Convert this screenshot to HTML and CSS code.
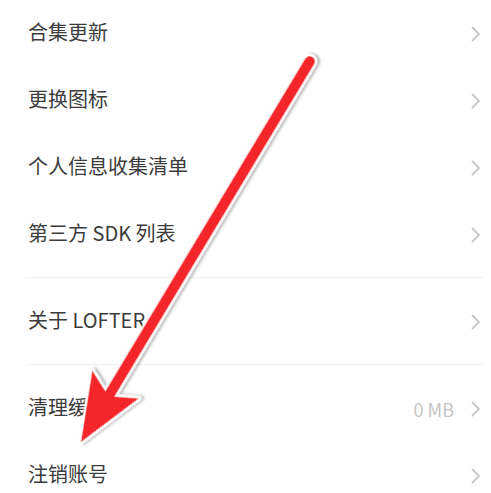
FILE: index.html
```html
<!DOCTYPE html>
<html lang="zh-CN">
<head>
<meta charset="utf-8">
<link rel="stylesheet" href="styles.css">
</head>
<body>
<div class="page">
  <div class="group">
    <div class="row"><span class="label">合集更新</span><span class="right"><svg class="chev" viewBox="0 0 10 16"><polyline points="1.5,1.5 8,8 1.5,14.5"/></svg></span></div>
    <div class="row"><span class="label">更换图标</span><span class="right"><svg class="chev" viewBox="0 0 10 16"><polyline points="1.5,1.5 8,8 1.5,14.5"/></svg></span></div>
    <div class="row"><span class="label">个人信息收集清单</span><span class="right"><svg class="chev" viewBox="0 0 10 16"><polyline points="1.5,1.5 8,8 1.5,14.5"/></svg></span></div>
    <div class="row"><span class="label">第三方 SDK 列表</span><span class="right"><svg class="chev" viewBox="0 0 10 16"><polyline points="1.5,1.5 8,8 1.5,14.5"/></svg></span></div>
  </div>
  <div class="divider"></div>
  <div class="group">
    <div class="row"><span class="label">关于 LOFTER</span><span class="right"><svg class="chev" viewBox="0 0 10 16"><polyline points="1.5,1.5 8,8 1.5,14.5"/></svg></span></div>
  </div>
  <div class="divider"></div>
  <div class="group">
    <div class="row"><span class="label">清理缓存</span><span class="right"><span class="value">0 MB</span><svg class="chev" viewBox="0 0 10 16"><polyline points="1.5,1.5 8,8 1.5,14.5"/></svg></span></div>
    <div class="row"><span class="label">注销账号</span><span class="right"><svg class="chev" viewBox="0 0 10 16"><polyline points="1.5,1.5 8,8 1.5,14.5"/></svg></span></div>
  </div>

  <svg class="arrow" viewBox="0 0 491 493" width="491" height="493">
    <defs>
      <filter id="sh" x="-20%" y="-20%" width="140%" height="140%">
        <feDropShadow dx="1.5" dy="2" stdDeviation="1.6" flood-color="#000" flood-opacity="0.35"/>
      </filter>
    </defs>
    <g transform="translate(81,442) rotate(-59)" filter="url(#sh)">
      <line x1="50" y1="0" x2="444" y2="0" stroke="#fff" stroke-width="15" stroke-linecap="round"/>
      <polygon points="0,0 67,27 56,5.5 56,-5.5 67,-27" fill="#fff" stroke="#fff" stroke-width="5" stroke-linejoin="round"/>
      <line x1="50" y1="0" x2="444" y2="0" stroke="#f5272b" stroke-width="10.5" stroke-linecap="round"/>
      <polygon points="0,0 67,27 56,5.2 56,-5.2 67,-27" fill="#f5272b"/>
    </g>
  </svg>
</div>
</body>
</html>
```
FILE: styles.css
```css
html, body {
  margin: 0;
  padding: 0;
  background: #ffffff;
}
body {
  font-family: "Noto Sans CJK SC", "Noto Sans", sans-serif;
  color: #3c3c3c;
}
.page {
  position: relative;
  width: 491px;
  height: 493px;
  overflow: hidden;
}
.group {
  display: flex;
  flex-direction: column;
}
.row {
  box-sizing: border-box;
  height: 67px;
  display: flex;
  align-items: center;
  justify-content: space-between;
  padding: 0 10px 4px 28px;
}
.label {
  font-size: 20px;
  line-height: 1;
  letter-spacing: 0;
}
.right {
  display: flex;
  align-items: center;
  gap: 17px;
  padding-top: 4px;
}
.value {
  font-size: 18px;
  color: #c4c4c4;
  line-height: 1;
}
.chev {
  width: 10px;
  height: 16px;
  fill: none;
  stroke: #c8c8c8;
  stroke-width: 1.8;
  stroke-linecap: round;
  stroke-linejoin: round;
}
.divider {
  height: 1px;
  background: #f1f1f1;
  margin: 9px 8px 10px 26px;
}
.arrow {
  position: absolute;
  left: 0;
  top: 0;
  pointer-events: none;
}
```
